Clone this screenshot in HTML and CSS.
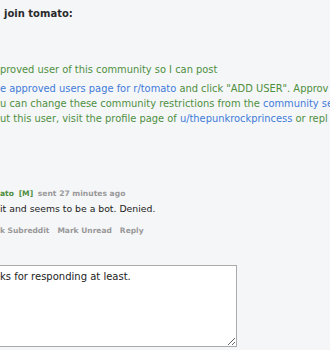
FILE: index.html
```html
<!DOCTYPE html>
<html lang="en">
<head>
    <meta charset="UTF-8">
    <title>messages: moderator mail</title>
    <link rel="stylesheet" href="styles.css">
</head>
<body>
    <div class="thread">
        <div class="subject">join tomato:</div>

        <div class="msg-body">
            <p>proved user of this community so I can post</p>
            <p><a href="#">e approved users page for r/tomato</a> and click "ADD USER". Approv<br>u can change these community restrictions from the <a href="#">community se</a><br>ut this user, visit the profile page of <a href="#">u/thepunkrockprincess</a> or repl</p>
        </div>

        <div class="reply">
            <div class="tagline"><span class="author">ato</span> <span class="mod">[M]</span> sent 27 minutes ago</div>
            <div class="reply-body">it and seems to be a bot. Denied.</div>
            <ul class="buttons">
                <li>k Subreddit</li>
                <li>Mark Unread</li>
                <li>Reply</li>
            </ul>
        </div>

        <form class="reply-form">
            <textarea>ks for responding at least.</textarea>
        </form>
    </div>
</body>
</html>
```

FILE: styles.css
```css
* {
    margin: 0;
    padding: 0;
    box-sizing: border-box;
}

body {
    font-family: "DejaVu Sans", Verdana, sans-serif;
    background-color: #f5f6f8;
    color: #222;
    overflow: hidden;
    white-space: nowrap;
}

.thread {
    padding-top: 7px;
}

/* Sujeito da mensagem */
.subject {
    font-size: 10px;
    font-weight: bold;
    line-height: 14px;
    color: #2a2a2a;
    padding-left: 4px;
}

.msg-body {
    margin-top: 41px;
    font-size: 9.9px;
    line-height: 15px;
    color: #4e8f3e;
}

.msg-body p + p {
    margin-top: 4px;
}

.msg-body a {
    color: #3f7bd8;
    text-decoration: none;
}

/* Resposta do moderador */
.reply {
    margin-top: 62px;
}

.tagline {
    font-size: 7.6px;
    font-weight: bold;
    line-height: 12px;
    color: #999;
}

.tagline .mod {
    margin: 0 2px;
}

.tagline .author,
.tagline .mod {
    color: #4e8f3e;
}

.reply-body {
    margin-top: 2px;
    font-size: 9.3px;
    line-height: 14px;
    color: #222;
}

.buttons {
    list-style: none;
    display: flex;
    gap: 8px;
    margin-top: 9px;
    font-size: 7.5px;
    font-weight: bold;
    line-height: 12px;
    color: #999;
}

.reply-form {
    margin-top: 28px;
}

.reply-form textarea {
    display: block;
    width: 242px;
    height: 82px;
    margin-left: -5px;
    padding: 4px;
    border: 1px solid #aaa;
    background: #fff;
    font-family: "DejaVu Sans", Verdana, sans-serif;
    font-size: 10px;
    line-height: 13px;
    color: #222;
    resize: both;
}
```
